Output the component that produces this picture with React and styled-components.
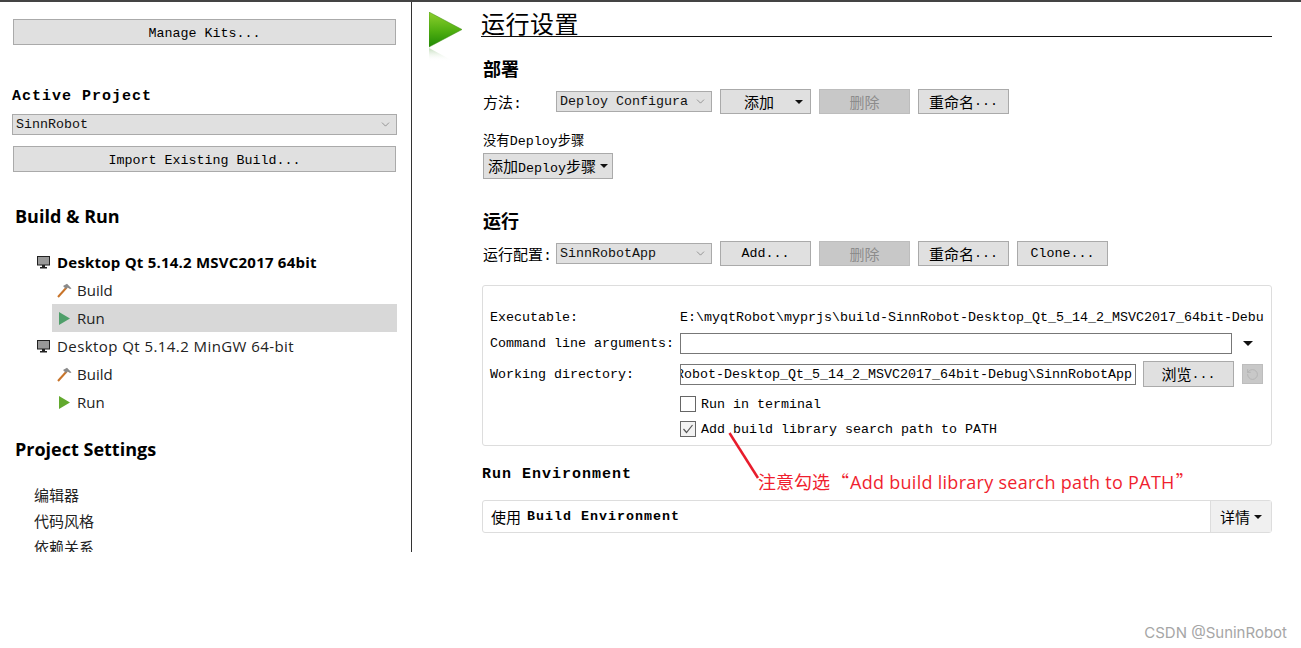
import React from 'react'
import styled, { createGlobalStyle } from 'styled-components'
import { ChevronDown, RotateCcw } from 'lucide-react'

const MONO = '"Liberation Mono", "Noto Sans CJK SC", monospace'
const SANS = '"Open Sans", "Noto Sans CJK SC", sans-serif'

const GlobalStyle = createGlobalStyle`
  html, body {
    margin: 0;
    background: #fff;
    color: #000;
  }
  * { box-sizing: border-box; }
`

const Page = styled.div`
  position: relative;
  width: 1301px;
  height: 648px;
  overflow: hidden;
  background: #fff;
  border-top: 2px solid #444;
  font-family: ${MONO};
  font-size: 13.33px;
`

const Layout = styled.div`
  display: flex;
  height: 550px;
`

const Sidebar = styled.aside`
  width: 412px;
  flex: none;
  height: 550px;
  overflow: hidden;
  padding: 17px 15px 0 13px;
  border-right: 1px solid #333;
`

const Button = styled.div`
  display: flex;
  align-items: center;
  justify-content: center;
  gap: ${p => (p.$gap ? p.$gap : 0)}px;
  width: ${p => (p.$width ? `${p.$width}px` : 'auto')};
  height: ${p => p.$height || 25}px;
  flex: none;
  background: ${p => (p.$disabled ? '#c8c8c8' : '#e0e0e0')};
  border: 1px solid ${p => (p.$disabled ? '#bdbdbd' : '#aaa')};
  color: ${p => (p.$disabled ? '#8c8c8c' : '#000')};
  white-space: nowrap;
`

const ButtonLabel = styled.span`
  font-size: 15px;
`

const WideButton = styled(Button)`
  width: 100%;
  height: 26px;
  padding-top: 3px;
  margin-top: ${p => p.$top}px;
`

const MenuButton = styled(Button)`
  padding-left: 16px;
`

const Select = styled.div`
  display: flex;
  align-items: center;
  justify-content: space-between;
  flex: none;
  height: 21px;
  padding: 0 4px 0 3px;
  background: #e0e0e0;
  border: 1px solid #aaa;
  white-space: nowrap;
  color: #111;
  svg { color: #555; }
`

const ProjectSelect = styled(Select)`
  margin: 10px -1px 0 -1px;
`

const ActiveTitle = styled.div`
  margin: 41px 0 0 -1px;
  height: 18px;
  line-height: 22px;
  font-size: 15px;
  font-weight: 700;
  letter-spacing: 1px;
`

const SideHeading = styled.div`
  margin: ${p => p.$top}px 0 0 2px;
  height: 24px;
  line-height: 24px;
  font-family: ${SANS};
  font-size: 18px;
  font-weight: 700;
`

const Tree = styled.div`
  margin-top: 20px;
  font-family: ${SANS};
  font-size: 15px;
`

const KitRow = styled.div`
  display: flex;
  align-items: center;
  gap: 7px;
  height: 28px;
  padding-left: 24px;
  font-weight: ${p => (p.$active ? 700 : 400)};
  letter-spacing: ${p => (p.$active ? 0.22 : 0.43)}px;
  color: ${p => (p.$active ? '#000' : '#222')};
`

const StepRow = styled.div`
  display: flex;
  align-items: center;
  gap: 5px;
  height: 28px;
  margin: 0 -1px 0 39px;
  padding-left: 5px;
  background: ${p => (p.$active ? '#d8d8d8' : 'transparent')};
  color: #222;
`

const SettingsList = styled.div`
  margin-top: 21px;
  padding-left: 21px;
  font-family: ${SANS};
  font-size: 15px;
`

const SettingsItem = styled.div`
  height: 26px;
  line-height: 26px;
  color: #222;
`

const Main = styled.main`
  flex: 1;
  min-width: 0;
  padding: 0 29px 0 17px;
`

const PageHeader = styled.header`
  display: flex;
  margin-top: 10px;
`

const HeaderIcon = styled.div`
  width: 52px;
  height: 25px;
  flex: none;
  svg { display: block; }
`

const PageTitle = styled.h1`
  flex: 1;
  margin: 0;
  height: 25px;
  line-height: 24px;
  font-family: ${SANS};
  font-size: 24px;
  font-weight: 400;
  letter-spacing: 0.5px;
  border-bottom: 1px solid #111;
`

const Content = styled.div`
  padding-left: 53px;
`

const SectionTitle = styled.h2`
  margin: ${p => p.$top}px 0 0 1px;
  height: 24px;
  line-height: 24px;
  font-family: ${SANS};
  font-size: 18px;
  font-weight: 700;
`

const EnvTitle = styled.h3`
  margin: 17px 0 0;
  height: 24px;
  line-height: 24px;
  font-size: 15px;
  font-weight: 700;
  letter-spacing: 1px;
`

const ToolRow = styled.div`
  display: flex;
  align-items: center;
  gap: 8px;
  height: 25px;
  margin-top: 8px;
`

const RowLabel = styled.div`
  width: 65px;
  margin-left: 1px;
  flex: none;
  white-space: nowrap;
  font-size: 15px;
`

const ConfigSelect = styled(Select)`
  width: 156px;
`

const Note = styled.div`
  margin: 17px 0 0 1px;
  height: 18px;
  line-height: 22px;
`

const AddStepButton = styled(Button)`
  margin: 4px 0 0 1px;
`

const Caret = styled.span`
  display: inline-block;
  width: 0;
  height: 0;
  border-left: 4px solid transparent;
  border-right: 4px solid transparent;
  border-top: 4px solid #111;
`

const Panel = styled.section`
  height: 161px;
  margin-top: 19px;
  padding: 21px 7px 0 7px;
  border: 1px solid #ddd;
  border-radius: 3px;
`

const FormRow = styled.div`
  display: flex;
  align-items: center;
  height: ${p => p.$height}px;
  margin-top: ${p => p.$top || 0}px;
`

const FormLabel = styled.div`
  width: 190px;
  flex: none;
  white-space: nowrap;
`

const ClippedValue = styled.div`
  flex: 1;
  min-width: 0;
  overflow: hidden;
  white-space: nowrap;
`

const TextInput = styled.div`
  display: flex;
  justify-content: flex-end;
  align-items: center;
  width: ${p => p.$width}px;
  height: 21px;
  flex: none;
  overflow: hidden;
  white-space: nowrap;
  padding: 0 3px 0 0;
  border: 1px solid #777;
`

const InputMenu = styled.div`
  display: flex;
  justify-content: center;
  width: 36px;
`

const BigCaret = styled(Caret)`
  border-left-width: 5px;
  border-right-width: 5px;
  border-top-width: 5px;
`

const BrowseButton = styled(Button)`
  margin-left: 7px;
`

const ResetButton = styled.div`
  display: flex;
  align-items: center;
  justify-content: center;
  width: 21px;
  height: 20px;
  margin-left: 8px;
  background: #c8c8c8;
  border: 1px solid #bdbdbd;
  color: #b0b0b0;
`

const CheckField = styled.div`
  display: flex;
  align-items: center;
  gap: 5px;
`

const CheckBox = styled.span`
  display: flex;
  align-items: center;
  justify-content: center;
  width: 16px;
  height: 16px;
  border: 1px solid #666;
  background: ${p => (p.$checked ? '#f2f2f2' : '#fff')};
`

const EnvBar = styled.div`
  display: flex;
  align-items: stretch;
  height: 33px;
  margin-top: 13px;
  border: 1px solid #ddd;
  border-radius: 3px;
`

const EnvText = styled.div`
  flex: 1;
  display: flex;
  align-items: center;
  gap: 6px;
  padding-left: 8px;
  font-size: 15px;
  b { font-size: 13.33px; letter-spacing: 1px; }
`

const EnvDetails = styled.div`
  display: flex;
  align-items: center;
  gap: 4px;
  width: 61px;
  padding-left: 9px;
  background: #f0f0f0;
  border-left: 1px solid #ddd;
  font-size: 15px;
`

const Callout = styled.div`
  position: absolute;
  left: 758px;
  top: 467px;
  font-family: ${SANS};
  font-size: 18px;
  line-height: 24px;
  color: #f01f2f;
  white-space: nowrap;
`

const CalloutText = styled.span`
  letter-spacing: 0.28px;
`

const CalloutQuote = styled.span`
  font-family: "Noto Sans CJK SC", sans-serif;
  padding: 0 1px;
`

const CalloutLine = styled.svg`
  position: absolute;
  left: 726px;
  top: 430px;
`

const Watermark = styled.div`
  position: absolute;
  right: 14px;
  top: 621px;
  font-family: "Inter", sans-serif;
  font-size: 15px;
  color: #a6a6a6;
`

const MonitorIcon = () => (
  <svg width="13" height="13" viewBox="0 0 13 13">
    <rect x="0.5" y="0.5" width="12" height="8.5" fill="#999" stroke="#222" />
    <rect x="5" y="9" width="3" height="2" fill="#222" />
    <rect x="3" y="11" width="7" height="1.5" fill="#222" />
  </svg>
)

const HammerIcon = () => (
  <svg width="15" height="15" viewBox="0 0 15 15">
    <path d="M1 14 L10 4" stroke="#c8742a" strokeWidth="2" fill="none" />
    <path d="M6 3 L10 0.8 L14.5 5.5 L13 6 L10.5 4.5 L9 6 Z" fill="#8a8a8a" />
  </svg>
)

const RunIcon = ({ color }) => (
  <svg width="15" height="15" viewBox="0 0 15 15">
    <path d="M2 1 L13 7.5 L2 14 Z" fill={color} />
  </svg>
)

const BigPlayIcon = () => (
  <svg width="36" height="50" viewBox="0 0 36 50">
    <defs>
      <linearGradient id="playFill" x1="0" y1="0" x2="0" y2="1">
        <stop offset="0" stopColor="#8ed02e" />
        <stop offset="0.55" stopColor="#4fae10" />
        <stop offset="1" stopColor="#1f8a06" />
      </linearGradient>
      <linearGradient id="playShade" x1="0" y1="0" x2="0" y2="1">
        <stop offset="0" stopColor="#8fbf80" stopOpacity="0.55" />
        <stop offset="1" stopColor="#ffffff" stopOpacity="0" />
      </linearGradient>
    </defs>
    <path d="M0 0 L33 17.5 L0 35 Z" fill="url(#playFill)" stroke="#3d8c10" strokeWidth="0.5" />
    <path d="M0 36 L24 49 L0 49 Z" fill="url(#playShade)" />
  </svg>
)

const kits = [
  { name: 'Desktop Qt 5.14.2 MSVC2017 64bit', active: true, runColor: '#4f9f6a' },
  { name: 'Desktop Qt 5.14.2 MinGW 64-bit', active: false, runColor: '#62a92e' },
]

const settings = ['编辑器', '代码风格', '依赖关系']

const EditButtons = () => (
  <>
    <Button $width={91} $disabled>
      <ButtonLabel>删除</ButtonLabel>
    </Button>
    <Button $width={91}>
      <ButtonLabel>重命名</ButtonLabel>...
    </Button>
  </>
)

const WORK_DIR = 'E:\\myqtRobot\\myprjs\\build-SinnRobot-Desktop_Qt_5_14_2_MSVC2017_64bit-Debug\\SinnRobotApp'

export default function App() {
  return (
    <>
      <GlobalStyle />
      <Page>
        <Layout>
          <Sidebar>
            <WideButton $top={0}>Manage Kits...</WideButton>
            <ActiveTitle>Active Project</ActiveTitle>
            <ProjectSelect>
              SinnRobot
              <ChevronDown size={13} strokeWidth={1} />
            </ProjectSelect>
            <WideButton $top={11}>Import Existing Build...</WideButton>

            <SideHeading $top={32}>Build &amp; Run</SideHeading>
            <Tree>
              {kits.map(kit => (
                <React.Fragment key={kit.name}>
                  <KitRow $active={kit.active}>
                    <MonitorIcon />
                    {kit.name}
                  </KitRow>
                  <StepRow>
                    <HammerIcon />
                    Build
                  </StepRow>
                  <StepRow $active={kit.active}>
                    <RunIcon color={kit.runColor} />
                    Run
                  </StepRow>
                </React.Fragment>
              ))}
            </Tree>

            <SideHeading $top={21}>Project Settings</SideHeading>
            <SettingsList>
              {settings.map(item => (
                <SettingsItem key={item}>{item}</SettingsItem>
              ))}
            </SettingsList>
          </Sidebar>

          <Main>
            <PageHeader>
              <HeaderIcon>
                <BigPlayIcon />
              </HeaderIcon>
              <PageTitle>运行设置</PageTitle>
            </PageHeader>

            <Content>
              <SectionTitle $top={20}>部署</SectionTitle>
              <ToolRow>
                <RowLabel>方法:</RowLabel>
                <ConfigSelect>
                  Deploy Configura
                  <ChevronDown size={13} strokeWidth={1} />
                </ConfigSelect>
                <MenuButton $width={91} $gap={21}>
                  <ButtonLabel>添加</ButtonLabel>
                  <Caret />
                </MenuButton>
                <EditButtons />
              </ToolRow>
              <Note>没有Deploy步骤</Note>
              <AddStepButton $width={130} $height={26} $gap={4}>
                <span>
                  <ButtonLabel>添加</ButtonLabel>Deploy<ButtonLabel>步骤</ButtonLabel>
                </span>
                <Caret />
              </AddStepButton>

              <SectionTitle $top={30}>运行</SectionTitle>
              <ToolRow>
                <RowLabel>运行配置:</RowLabel>
                <ConfigSelect>
                  SinnRobotApp
                  <ChevronDown size={13} strokeWidth={1} />
                </ConfigSelect>
                <Button $width={91}>Add...</Button>
                <EditButtons />
                <Button $width={91}>Clone...</Button>
              </ToolRow>

              <Panel>
                <FormRow $height={20}>
                  <FormLabel>Executable:</FormLabel>
                  <ClippedValue>{WORK_DIR}</ClippedValue>
                </FormRow>
                <FormRow $height={22} $top={5}>
                  <FormLabel>Command line arguments:</FormLabel>
                  <TextInput $width={552} />
                  <InputMenu>
                    <BigCaret />
                  </InputMenu>
                </FormRow>
                <FormRow $height={26} $top={7}>
                  <FormLabel>Working directory:</FormLabel>
                  <TextInput $width={456}>{WORK_DIR}</TextInput>
                  <BrowseButton $width={91} $height={26}>
                    <ButtonLabel>浏览</ButtonLabel>...
                  </BrowseButton>
                  <ResetButton>
                    <RotateCcw size={13} strokeWidth={1.5} />
                  </ResetButton>
                </FormRow>
                <FormRow $height={18} $top={8}>
                  <FormLabel />
                  <CheckField>
                    <CheckBox />
                    Run in terminal
                  </CheckField>
                </FormRow>
                <FormRow $height={18} $top={7}>
                  <FormLabel />
                  <CheckField>
                    <CheckBox $checked>
                      <svg width="12" height="12" viewBox="0 0 12 12">
                        <path d="M1.5 6 L4.5 9.5 L10.5 2" stroke="#555" strokeWidth="1.2" fill="none" />
                      </svg>
                    </CheckBox>
                    Add build library search path to PATH
                  </CheckField>
                </FormRow>
              </Panel>

              <EnvTitle>Run Environment</EnvTitle>
              <EnvBar>
                <EnvText>
                  使用 <b>Build Environment</b>
                </EnvText>
                <EnvDetails>
                  详情
                  <Caret />
                </EnvDetails>
              </EnvBar>
            </Content>
          </Main>
        </Layout>

        <CalloutLine width="36" height="50" viewBox="0 0 36 50">
          <path d="M3.5 1 L32 46" stroke="#e81c2c" strokeWidth="2.5" fill="none" />
        </CalloutLine>
        <Callout>
          注意勾选<CalloutQuote>“</CalloutQuote><CalloutText>Add build library search path to PATH</CalloutText><CalloutQuote>”</CalloutQuote>
        </Callout>
        <Watermark>CSDN @SuninRobot</Watermark>
      </Page>
    </>
  )
}
